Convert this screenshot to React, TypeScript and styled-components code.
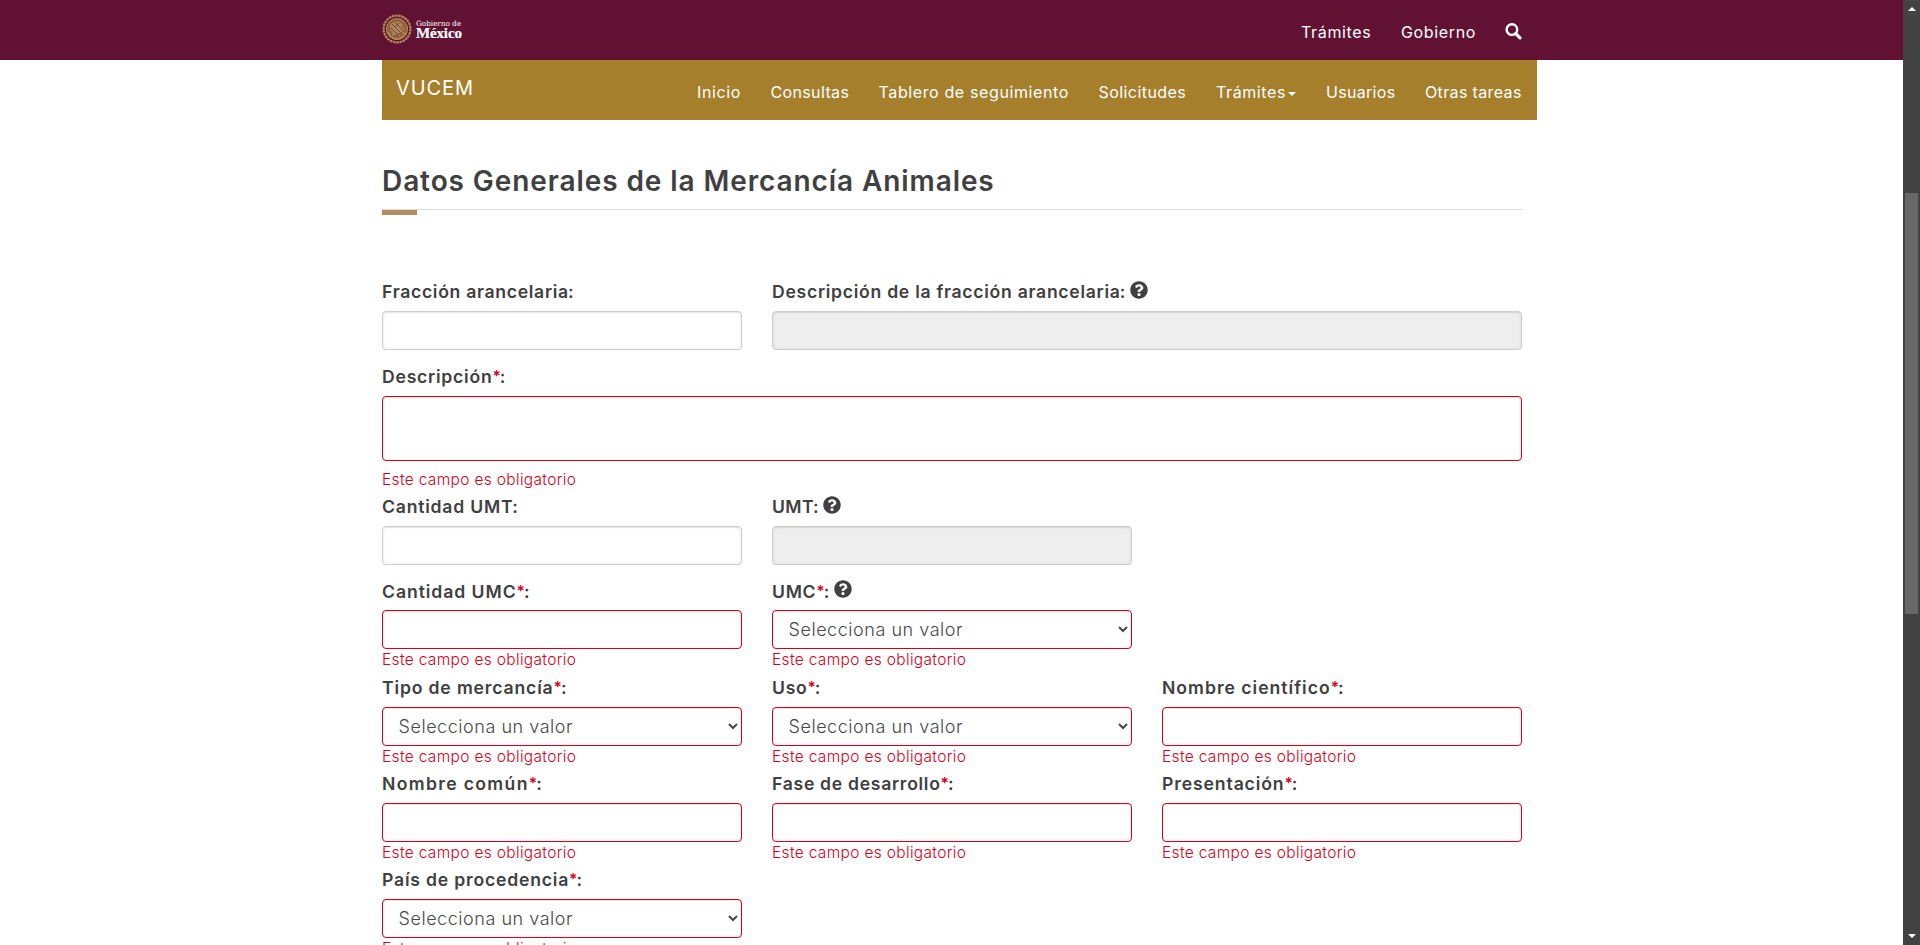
import React from 'react';
import styled, { createGlobalStyle, css } from 'styled-components';
import { FaQuestionCircle } from 'react-icons/fa';

const GlobalStyle = createGlobalStyle`
  *, *::before, *::after { box-sizing: border-box; }
  body {
    margin: 0;
    overflow: hidden;
    background: #fff;
    color: #404041;
    font-family: Inter, 'Open Sans', sans-serif;
    font-size: 17.6px;
    font-variant-ligatures: none;
  }
`;

const Window = styled.div`
  display: flex;
  height: 100vh;
  overflow: hidden;
`;

const Page = styled.div`
  flex: 1;
  min-width: 0;
  overflow: hidden;
`;

const Container = styled.div`
  width: 1140px;
  margin-left: 382px;
`;

const TopBar = styled.header`
  height: 60px;
  background: #611232;
`;

const TopBarInner = styled(Container)`
  display: flex;
  justify-content: space-between;
  height: 60px;
`;

const Brand = styled.a`
  display: flex;
  align-items: flex-start;
  gap: 4px;
  padding-top: 14px;
`;

const BrandName = styled.span`
  display: flex;
  flex-direction: column;
  padding-top: 6px;
  color: #fff;
`;

const BrandSmall = styled.span`
  font: 7.4px/8px 'DejaVu Serif', serif;
  letter-spacing: -0.1px;
`;

const BrandLarge = styled.span`
  margin-top: -2px;
  font: bold 15px/14px 'Liberation Serif', serif;
  letter-spacing: -0.15px;
  -webkit-text-stroke: 0.2px #fff;
`;

const Links = styled.nav`
  display: flex;
  gap: 30px;
`;

const NavLink = styled.a<{ $width: number; $track: number }>`
  display: flex;
  align-items: center;
  width: ${(p) => p.$width}px;
  padding-top: 3px;
  color: #fff;
  font-size: 16px;
  font-weight: 420;
  letter-spacing: ${(p) => p.$track}px;
  white-space: nowrap;
`;

const SearchIcon = styled.svg`
  width: 17px;
  height: 17px;
  margin-top: 22.5px;
`;

const Caret = styled.span`
  margin-left: 2px;
  margin-top: 5px;
  border-top: 4px solid #fff;
  border-left: 4px solid transparent;
  border-right: 4px solid transparent;
`;

const SubNav = styled.div`
  display: flex;
  justify-content: space-between;
  width: 1155px;
  height: 60px;
  margin-left: 382px;
  padding: 0 15px 0 14px;
  background: #a57f2c;
`;

const SubBrand = styled.a`
  padding-top: 16px;
  color: #fff;
  font-size: 20px;
  line-height: 24px;
  letter-spacing: 0.9px;
`;

const Title = styled.h1`
  height: 90px;
  margin: 0;
  padding-top: 44px;
  border-bottom: 1px solid #ddd;
  font-size: 28px;
  font-weight: 570;
  line-height: 35px;
  letter-spacing: 0.91px;
  white-space: nowrap;
`;

const Accent = styled.div`
  width: 35px;
  height: 5px;
  margin-bottom: 65.3px;
  background: #b38e5d;
`;

const Row = styled.div`
  display: grid;
  grid-template-columns: repeat(3, 360px);
  column-gap: 30px;
`;

const Field = styled.div<{ $span: number; $gap: number }>`
  grid-column: span ${(p) => p.$span};
  padding-bottom: ${(p) => p.$gap}px;
`;

const Label = styled.label<{ $track: number }>`
  display: flex;
  align-items: flex-start;
  height: 30.7px;
  font-weight: 600;
  line-height: 23.8px;
  letter-spacing: ${(p) => p.$track}px;
  white-space: nowrap;
`;

const Star = styled.span`
  color: #d0021b;
  font-size: 15.5px;
  letter-spacing: 0;
`;

const Colon = styled.span`
  margin-left: -1px;
  letter-spacing: 0;
`;

const HelpIcon = styled(FaQuestionCircle)`
  width: 18px;
  height: 18px;
  margin: 0.7px 0 0 4.6px;
`;

const control = css<{ $invalid?: boolean }>`
  display: block;
  width: 100%;
  height: 39px;
  margin: 0;
  padding: 6px 12px;
  border: 1px solid ${(p) => (p.$invalid ? '#d0021b' : '#ccc')};
  border-radius: 4px;
  outline: 0;
  background: #fff;
  box-shadow: inset 0 1px 1px rgba(0, 0, 0, 0.075), inset 0 0 4px rgba(0, 0, 0, 0.06);
  color: #555;
  font: 300 18px Inter, sans-serif;
`;

const Input = styled.input<{ $invalid?: boolean }>`
  ${control}
  &:disabled { background: #eee; }
`;

const TextArea = styled.textarea<{ $invalid?: boolean }>`
  ${control}
  height: 65px;
  resize: none;
`;

const Select = styled.select<{ $invalid?: boolean }>`
  ${control}
  padding-left: 11.5px;
  color: #484848;
  letter-spacing: 0.54px;
`;

const ErrorText = styled.p<{ $roomy: boolean }>`
  height: 26.6px;
  margin: ${(p) => (p.$roomy ? 7.65 : 0)}px 0 0;
  padding-top: ${(p) => (p.$roomy ? 1 : 0.1)}px;
  color: #d0021b;
  font-size: 15.5px;
  font-weight: 300;
  line-height: 21px;
  letter-spacing: 0.33px;
`;

const ScrollBar = styled.div`
  display: flex;
  flex-direction: column;
  justify-content: space-between;
  align-items: center;
  width: 17px;
  padding: 7px 0;
  background: #424242;
`;

const Thumb = styled.div`
  width: 13px;
  height: 421px;
  margin-bottom: 139px;
  background: #686868;
`;

const Arrow = styled.span<{ $up?: boolean }>`
  border-left: 4px solid transparent;
  border-right: 4px solid transparent;
  ${(p) => (p.$up ? 'border-bottom: 4px solid #fff;' : 'border-top: 4px solid #fff;')}
`;

type FieldSpec = {
  text: string;
  track: number;
  kind?: 'input' | 'textarea' | 'select';
  required?: boolean;
  help?: boolean;
  disabled?: boolean;
  span?: number;
};

const rows: FieldSpec[][] = [
  [
    { text: 'Fracción arancelaria', track: 0.7 },
    { text: 'Descripción de la fracción arancelaria', track: 0.72, help: true, disabled: true, span: 2 },
  ],
  [{ text: 'Descripción', track: 0.76, kind: 'textarea', required: true, span: 3 }],
  [
    { text: 'Cantidad UMT', track: 0.78 },
    { text: 'UMT', track: 0.4, help: true, disabled: true },
  ],
  [
    { text: 'Cantidad UMC', track: 0.94, required: true },
    { text: 'UMC', track: 0.7, kind: 'select', required: true, help: true },
  ],
  [
    { text: 'Tipo de mercancía', track: 0.84, kind: 'select', required: true },
    { text: 'Uso', track: 0.7, kind: 'select', required: true },
    { text: 'Nombre científico', track: 1, required: true },
  ],
  [
    { text: 'Nombre común', track: 1.34, required: true },
    { text: 'Fase de desarrollo', track: 0.7, required: true },
    { text: 'Presentación', track: 0.88, required: true },
  ],
  [{ text: 'País de procedencia', track: 0.8, kind: 'select', required: true }],
];

function FormField({ text, track, kind = 'input', required, help, disabled, span = 1 }: FieldSpec) {
  return (
    <Field $span={span} $gap={required ? 0 : 15}>
      <Label $track={track}>
        {text}
        {required && <Star>*</Star>}
        <Colon>:</Colon>
        {help && <HelpIcon />}
      </Label>
      {kind === 'input' && <Input $invalid={required} disabled={disabled} />}
      {kind === 'textarea' && <TextArea $invalid={required} />}
      {kind === 'select' && (
        <Select $invalid={required}>
          <option>Selecciona un valor</option>
        </Select>
      )}
      {required && <ErrorText $roomy={kind === 'textarea'}>Este campo es obligatorio</ErrorText>}
    </Field>
  );
}

function Emblem() {
  return (
    <svg width="30" height="30" viewBox="0 0 30 30" fill="none" stroke="#b08a56">
      <circle cx="15" cy="15" r="13.4" strokeWidth="2.2" strokeDasharray="2.6 0.6" />
      <circle cx="15" cy="15" r="10.6" fill="#8f6340" strokeWidth="1" />
      <path d="M8 13c1-4 5-6 9-5l4 3-3 1 4 3-3 1 3 3-5 0 1 3-4-2-4 1 1-3-3-2 3-1z" fill="#b08a56" strokeWidth="0.5" />
      <path d="M10 10l8 8M13 8l7 8M9 14l7 7M17 9l-4 4M20 18l-5 3" stroke="#6c2c36" strokeWidth="0.8" />
      <path d="M6 18c2 5 6 7 9 7s7-2 9-7" stroke="#c29c66" strokeWidth="1.2" strokeDasharray="1.5 0.7" />
    </svg>
  );
}

export default function App() {
  return (
    <>
      <GlobalStyle />
      <Window>
        <Page>
          <TopBar>
            <TopBarInner>
              <Brand>
                <Emblem />
                <BrandName>
                  <BrandSmall>Gobierno de</BrandSmall>
                  <BrandLarge>México</BrandLarge>
                </BrandName>
              </Brand>
              <Links>
                <NavLink $width={70} $track={0.65}>Trámites</NavLink>
                <NavLink $width={74} $track={0.64}>Gobierno</NavLink>
                <SearchIcon viewBox="0 0 17 17" fill="none" stroke="#fff">
                  <circle cx="6.9" cy="6.6" r="5.3" strokeWidth="2.4" />
                  <path d="M10.8 10.6L15 14.8" strokeWidth="3.2" strokeLinecap="round" />
                </SearchIcon>
              </Links>
            </TopBarInner>
          </TopBar>
          <SubNav>
            <SubBrand>VUCEM</SubBrand>
            <Links>
              <NavLink $width={43.5} $track={0.6}>Inicio</NavLink>
              <NavLink $width={78} $track={0.36}>Consultas</NavLink>
              <NavLink $width={190} $track={0.62}>Tablero de seguimiento</NavLink>
              <NavLink $width={87.5} $track={0.44}>Solicitudes</NavLink>
              <NavLink $width={80} $track={0.6}>
                Trámites
                <Caret />
              </NavLink>
              <NavLink $width={69} $track={0.3}>Usuarios</NavLink>
              <NavLink $width={97} $track={0.36}>Otras tareas</NavLink>
            </Links>
          </SubNav>
          <Container>
            <Title>Datos Generales de la Mercancía Animales</Title>
            <Accent />
            {rows.map((fields, i) => (
              <Row key={i}>
                {fields.map((field) => (
                  <FormField key={field.text} {...field} />
                ))}
              </Row>
            ))}
          </Container>
        </Page>
        <ScrollBar>
          <Arrow $up />
          <Thumb />
          <Arrow />
        </ScrollBar>
      </Window>
    </>
  );
}
